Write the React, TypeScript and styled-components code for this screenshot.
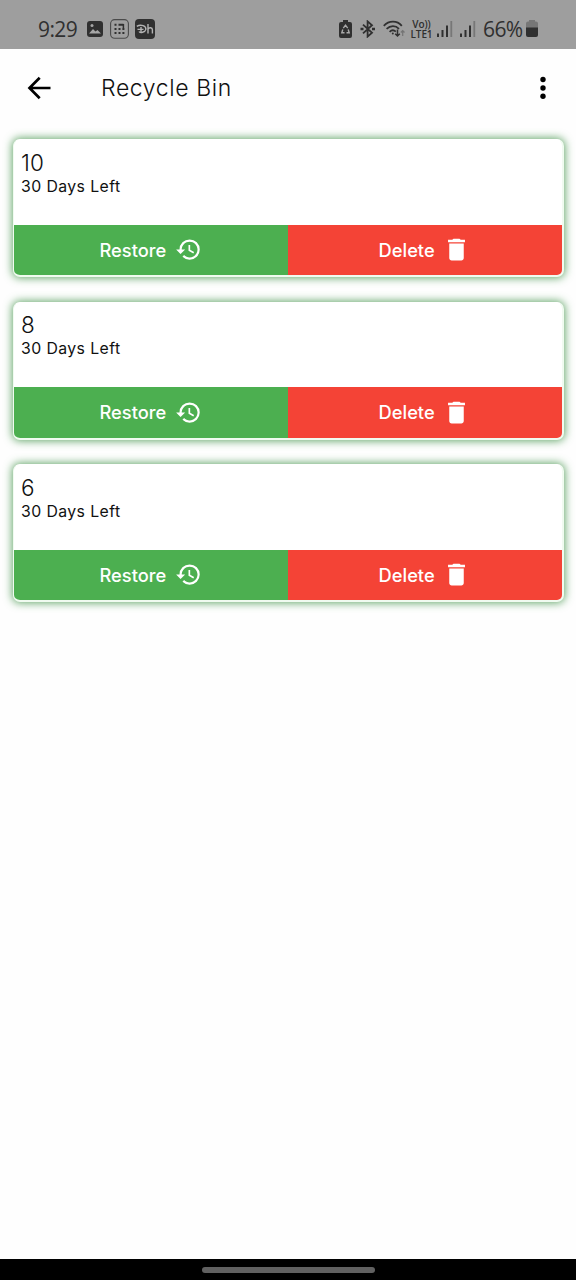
import React from 'react';
import styled, { createGlobalStyle } from 'styled-components';

const GlobalStyle = createGlobalStyle`
  * { box-sizing: border-box; }
  body { margin: 0; background: #fff; }
`;

const Screen = styled.div`
  display: flex;
  flex-direction: column;
  width: 576px;
  height: 1280px;
  background: #fefefe;
  color: #111;
  font-family: Inter, 'Liberation Sans', sans-serif;
`;

const StatusBar = styled.header`
  display: flex;
  align-items: center;
  height: 48.5px;
  padding: 9px 38px 0 38px;
  background: #9e9e9e;
  color: #303030;
  svg { display: block; flex: none; }
`;

const StatusText = styled.span<{ $width: number }>`
  width: ${p => p.$width}px;
  font: 400 21px/24px 'Open Sans', sans-serif;
  letter-spacing: -0.6px;
  white-space: nowrap;
`;

const Spacer = styled.div<{ $w?: number }>`
  ${p => (p.$w ? `width: ${p.$w}px; flex: none;` : 'flex: 1;')}
`;

const Carrier = styled.div`
  display: flex;
  flex-direction: column;
  align-items: center;
  width: 23px;
  font: 600 10px/10px 'Open Sans', sans-serif;
  letter-spacing: -0.1px;
  white-space: nowrap;
  span { display: block; height: 10px; }
`;

const AppBar = styled.nav`
  display: flex;
  align-items: center;
  height: 78px;
  padding: 0 18.5px 0 24px;
  svg { display: block; }
`;

const Title = styled.h1`
  flex: 1;
  margin: 0 0 0 47px;
  font-size: 23px;
  font-weight: 350;
  line-height: 30px;
  letter-spacing: 0.6px;
`;

const List = styled.main`
  display: flex;
  flex: 1;
  flex-direction: column;
  gap: 24.5px;
  padding: 12.5px 12px 0 12.5px;
`;

const Card = styled.article`
  display: flex;
  flex-direction: column;
  height: 138px;
  border: solid #f0fbf0;
  border-width: 1px 2px 2px 1.5px;
  border-top-color: #fff;
  border-radius: 7px;
  background: #fff;
  overflow: hidden;
  box-shadow: 0 0 8px 1px rgba(50, 137, 57, 0.75);
`;

const Details = styled.div`
  flex: 1;
  padding: 8.5px 7.5px 0;
`;

const Name = styled.div`
  font-size: 22.5px;
  font-weight: 350;
  line-height: 28px;
  letter-spacing: 0.2px;
`;

const Remaining = styled.div`
  font-size: 15.8px;
  font-weight: 380;
  line-height: 20px;
  letter-spacing: 0.42px;
`;

const Actions = styled.div`
  display: flex;
  height: 50.5px;
`;

const Action = styled.button<{ $color: string; $gap: number }>`
  display: flex;
  flex: 1;
  align-items: center;
  justify-content: center;
  gap: ${p => p.$gap}px;
  padding: 0;
  border: 0;
  background: ${p => p.$color};
  color: #fff;
  font: 500 18.3px/24px Inter, 'Liberation Sans', sans-serif;
  letter-spacing: 0;
  svg { display: block; }
`;

const NavBar = styled.footer`
  display: flex;
  justify-content: center;
  align-items: center;
  height: 21px;
  background: #000;
`;

const Handle = styled.div`
  width: 173px;
  height: 6px;
  border-radius: 3px;
  background: #616161;
`;

const PictureIcon = () => (
  <svg width="16" height="16" viewBox="0 0 16 16">
    <rect width="16" height="16" rx="3" fill="#303030" />
    <path d="M2 12.5 6 8l2.5 2.5L10.5 9l3.5 3.5z" fill="#a6a6a6" />
    <circle cx="5" cy="4.6" r="1.5" fill="#a6a6a6" />
  </svg>
);

const CalculatorIcon = () => (
  <svg width="19" height="20" viewBox="0 0 19 20">
    <rect x=".6" y=".6" width="17.8" height="18.6" rx="4" fill="none" stroke="#4a4a4a" strokeWidth="1.1" />
    <path d="M4.5 5.7h2M8.5 5.7h5M4.5 10h2M8.5 10h2M4.5 14h2M8.5 14h2M12.4 10h2M12.4 14h2" stroke="#303030" strokeWidth="2" />
    <path d="M13.4 5v4" stroke="#303030" strokeWidth="1.5" />
  </svg>
);

const HotstarIcon = () => (
  <svg width="20" height="20" viewBox="0 0 20 20">
    <rect width="20" height="20" rx="4" fill="#303030" />
    <path d="M1.8 7.4C6 4.7 11.5 7.2 10.8 10.5c-.5 2.8-6 3.8-6.7 2M2.5 10.4h6M6 8v6M13 5v9.5M13 10.3c1-2.2 4.4-2 4.4.5v3.7" fill="none" stroke="#b4b4b4" strokeWidth="1.4" />
  </svg>
);

const SaverIcon = () => (
  <svg width="13" height="18" viewBox="0 0 13 18">
    <path d="M4 0h5v2h2q2 0 2 2v12q0 2-2 2H2q-2 0-2-2V4q0-2 2-2h2z" fill="#303030" />
    <path d="m4.3 8.200 2.200-3 2.200 3M9.200 9.500l1 3.200H7.500M5.500 12.700H2.800l1-3.200" fill="none" stroke="#aaa" strokeWidth="1.400" />
  </svg>
);

const BluetoothIcon = () => (
  <svg width="16" height="18" viewBox="0 0 16 18" fill="none" stroke="#303030" strokeWidth="1.8">
    <path d="m3 4.6 9 8.2-4.4 3.8V1.4L12 5.2l-9 8.2" />
    <path d="M.5 9h3M12 9h3" strokeWidth="2.4" />
  </svg>
);

const WifiIcon = () => (
  <svg width="22" height="18" viewBox="0 0 22 18" fill="none" stroke="#303030" strokeWidth="1.8">
    <path d="M.8 5.8c5-5.5 13.4-5.5 18 0M3.6 8.8c3.8-3.7 9-3.7 12.4 0M6.6 11.8c2-1.8 4.4-1.8 6.2-.2" />
    <circle cx="9.8" cy="13.6" r="1" fill="#303030" stroke="none" />
    <path d="M14.5 9.5V16m-2.3-2.3 2.3 2.3 2.3-2.3" strokeWidth="1.5" />
    <path d="M19.7 16v-5.3m-1.8 1.8 1.8-1.8 1.8 1.8" stroke="#747474" strokeWidth="1.2" />
  </svg>
);

const SignalIcon = () => (
  <svg width="16" height="16" viewBox="0 0 16 16" fill="#303030">
    <path d="M0 12.6h2V16H0zM4.5 9h2v7h-2zM9 4.5h2V16H9z" />
    <path d="M13.4 0h1.8v16h-1.8z" fill="#777" />
  </svg>
);

const BatteryIcon = () => (
  <svg width="12" height="17" viewBox="0 0 12 17">
    <path d="M3 0h6v1.5h1q2 0 2 2V8H0V3.500q0-2 2-2h1z" fill="#777" />
    <path d="M0 7.500h12V15q0 2-2 2H2q-2 0-2-2z" fill="#303030" />
  </svg>
);

const BackIcon = () => (
  <svg width="30" height="30" viewBox="0 0 30 30" fill="none" stroke="#000" strokeWidth="2.7">
    <path d="M26.500 15H6M15.700 4.700 5.500 15l10.200 10.300" />
  </svg>
);

const MoreIcon = () => (
  <svg width="30" height="30" viewBox="0 0 30 30">
    <circle cx="15" cy="6.500" r="2.700" />
    <circle cx="15" cy="15" r="2.700" />
    <circle cx="15" cy="23.300" r="2.700" />
  </svg>
);

const RestoreIcon = () => (
  <svg width="27" height="27" viewBox="0 0 24 24" fill="#fff">
    <path d="M13 3a9 9 0 0 0-9 9H1l3.890 3.890.070.140L9 12H6c0-3.870 3.130-7 7-7s7 3.130 7 7-3.130 7-7 7c-1.930 0-3.680-.790-4.940-2.060l-1.420 1.420A8.950 8.950 0 0 0 13 21a9 9 0 0 0 0-18zm-1 5v5l4.280 2.540.720-1.210-3.500-2.080V8H12z" />
  </svg>
);

const TrashIcon = () => (
  <svg width="29" height="29" viewBox="0 0 24 24" fill="#fff">
    <path d="M6 19c0 1.100.900 2 2 2h8c1.100 0 2-.900 2-2V7H6v12zM19 4h-3.500l-1-1h-5l-1 1H5v2h14V4z" />
  </svg>
);

const items = [
  { name: '10', days: 30 },
  { name: '8', days: 30 },
  { name: '6', days: 30 },
];

export default function App() {
  return (
    <Screen>
      <GlobalStyle />
      <StatusBar>
        <StatusText $width={49}>9:29</StatusText>
        <PictureIcon />
        <Spacer $w={7} />
        <CalculatorIcon />
        <Spacer $w={6} />
        <HotstarIcon />
        <Spacer />
        <SaverIcon />
        <Spacer $w={8} />
        <BluetoothIcon />
        <Spacer $w={7} />
        <WifiIcon />
        <Spacer $w={5} />
        <Carrier><span>Vo))</span><span>LTE1</span></Carrier>
        <Spacer $w={4} />
        <SignalIcon />
        <Spacer $w={7} />
        <SignalIcon />
        <Spacer $w={7} />
        <StatusText $width={43}>66%</StatusText>
        <BatteryIcon />
      </StatusBar>
      <AppBar>
        <BackIcon />
        <Title>Recycle Bin</Title>
        <MoreIcon />
      </AppBar>
      <List>
        {items.map(item => (
          <Card key={item.name}>
            <Details>
              <Name>{item.name}</Name>
              <Remaining>{item.days} Days Left</Remaining>
            </Details>
            <Actions>
              <Action $color="#4caf50" $gap={8.5}>Restore<RestoreIcon /></Action>
              <Action $color="#f44336" $gap={7.5}>Delete<TrashIcon /></Action>
            </Actions>
          </Card>
        ))}
      </List>
      <NavBar><Handle /></NavBar>
    </Screen>
  );
}
